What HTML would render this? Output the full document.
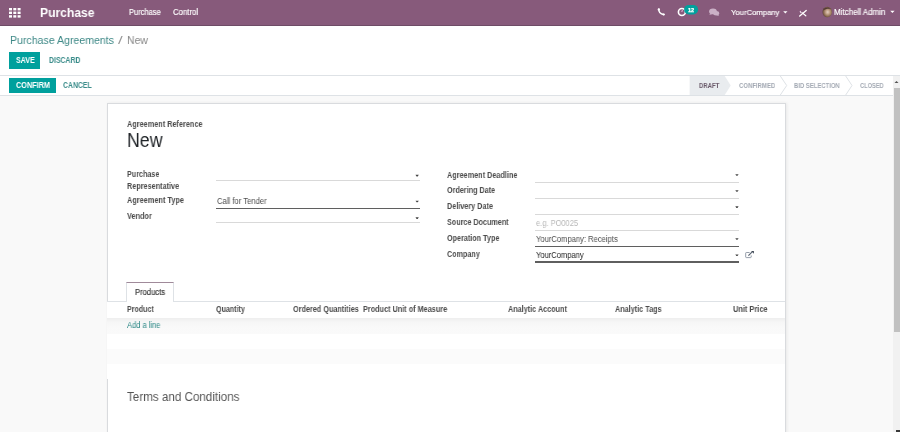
<!DOCTYPE html>
<html><head><meta charset="utf-8">
<style>
html,body{margin:0;padding:0;width:900px;height:432px;overflow:hidden;background:#fff;}
body{position:relative;font-family:"Liberation Sans",sans-serif;}
.t{position:absolute;line-height:0;white-space:nowrap;transform-origin:0 0;will-change:transform;}
.bg{position:absolute;}

</style></head><body>
<div class="bg" id="nav" style="left:0;top:0;width:900px;height:25px;background:#875A7B;border-bottom:1px solid #6e4c66"></div>
<div class="bg" id="cp" style="left:0;top:26px;width:900px;height:49px;background:#fff;border-bottom:1px solid #dee2e6"></div>
<div class="bg" id="content" style="left:0;top:76px;width:893px;height:356px;background:#f9f9f9"></div>
<div class="bg" id="status" style="left:0;top:76px;width:893px;height:19px;background:#fff;border-bottom:1px solid #dee2e6"></div>
<!-- grid icon -->
<svg class="bg" style="left:9px;top:8px" width="12" height="10" viewBox="0 0 12 10">
<g fill="#fff">
<rect x="0" y="0" width="3" height="2.4"/><rect x="4.3" y="0" width="3" height="2.4"/><rect x="8.6" y="0" width="3" height="2.4"/>
<rect x="0" y="3.6" width="3" height="2.4"/><rect x="4.3" y="3.6" width="3" height="2.4"/><rect x="8.6" y="3.6" width="3" height="2.4"/>
<rect x="0" y="7.2" width="3" height="2.4"/><rect x="4.3" y="7.2" width="3" height="2.4"/><rect x="8.6" y="7.2" width="3" height="2.4"/>
</g></svg>
<!-- SAVE / CONFIRM buttons -->
<div class="bg" style="left:9px;top:52px;width:31px;height:17px;background:#00A09D"></div>
<div class="bg" style="left:9px;top:78px;width:46.5px;height:15px;background:#00A09D"></div>
<!-- statusbar -->
<svg class="bg" style="left:680px;top:76px" width="213" height="19" viewBox="0 0 213 19">
<polygon points="9.6,0 44.7,0 50.7,9.5 44.7,19 9.6,19" fill="#e9ecef"/>
<polyline points="100.3,0 106.7,9.5 100.3,19" fill="none" stroke="#dee2e6" stroke-width="1"/>
<polyline points="165.7,0 172,9.5 165.7,19" fill="none" stroke="#dee2e6" stroke-width="1"/>
</svg>
<!-- scrollbar -->
<div class="bg" style="left:893px;top:76px;width:7px;height:356px;background:#f1f1f1"></div>
<div class="bg" style="left:894px;top:88px;width:6px;height:244px;background:#c1c1c1"></div>
<svg class="bg" style="left:893px;top:76px" width="7" height="12" viewBox="0 0 7 12"><polygon points="1.5,7 3.5,5 5.5,7" fill="#505050"/></svg>
<div class="bg" style="left:896px;top:430px;width:4px;height:2px;background:#3a3a3a"></div>
<!-- sheet -->
<div class="bg" id="sheet" style="left:107px;top:103px;width:677px;height:340px;background:#fff;border:1px solid #d9dbde;box-shadow:1px 0 3px rgba(0,0,0,.07)"></div>
<!-- field lines left -->
<div class="bg" style="left:216px;top:180px;width:203.5px;height:1px;background:#d9d9d9"></div>
<div class="bg" style="left:216px;top:207.5px;width:203.5px;height:1.5px;background:#5f5f5f"></div>
<div class="bg" style="left:216px;top:222px;width:203.5px;height:1px;background:#d9d9d9"></div>
<!-- field lines right -->
<div class="bg" style="left:535px;top:181.5px;width:204px;height:1px;background:#d9d9d9"></div>
<div class="bg" style="left:535px;top:197.5px;width:204px;height:1px;background:#d9d9d9"></div>
<div class="bg" style="left:535px;top:213.5px;width:204px;height:1px;background:#d9d9d9"></div>
<div class="bg" style="left:535px;top:229.5px;width:204px;height:1px;background:#d9d9d9"></div>
<div class="bg" style="left:535px;top:245.5px;width:204px;height:1.5px;background:#5f5f5f"></div>
<div class="bg" style="left:535px;top:261px;width:204px;height:1.5px;background:#5f5f5f"></div>
<!-- carets -->
<svg class="bg" style="left:0;top:0" width="900" height="432">
<g fill="#444"><polygon points="415.5,174.8 418.8,174.8 417.7,176.4 416.6,176.4"/><polygon points="415.5,200.7 418.8,200.7 417.7,202.3 416.6,202.3"/><polygon points="415.5,217.3 418.8,217.3 417.7,218.9 416.6,218.9"/><polygon points="735.3,174.2 738.6,174.2 737.5,175.8 736.4,175.8"/><polygon points="735.3,190.2 738.6,190.2 737.5,191.8 736.4,191.8"/><polygon points="735.3,206.3 738.6,206.3 737.5,207.9 736.4,207.9"/><polygon points="735.3,238.2 738.6,238.2 737.5,239.8 736.4,239.8"/><polygon points="735.3,254.5 738.6,254.5 737.5,256.1 736.4,256.1"/></g>
<g fill="#fff">
<polygon points="783.2,11.2 787.5,11.2 785.35,13.4"/>
<polygon points="890.2,10.8 894.6,10.8 892.4,13.0"/>
</g>
</svg>
<!-- notebook tab -->
<div class="bg" style="left:107px;top:301px;width:678px;height:1px;background:#dee2e6"></div>
<div class="bg" style="left:126px;top:282px;width:46px;height:20px;background:#fff;border:1px solid #dee2e6;border-top:1px solid #a08a9a;border-bottom:none"></div>
<!-- table rows -->
<div class="bg" style="left:107px;top:302px;width:678px;height:16px;background:#fff"></div>
<div class="bg" style="left:107px;top:318px;width:678px;height:15.5px;background:linear-gradient(#eeeeee,#f6f6f6 25%,#f9f9f9 55%,#fafafa)"></div>
<div class="bg" style="left:107px;top:333.5px;width:678px;height:15px;background:#fff"></div>
<div class="bg" style="left:107px;top:348.5px;width:678px;height:15px;background:#fbfbfb"></div>
<div class="bg" style="left:107px;top:363.5px;width:678px;height:15px;background:#fff"></div>
<!-- nav icons -->
<svg class="bg" style="left:0;top:0" width="900" height="25" viewBox="0 0 900 25">
<!-- phone -->
<path d="M658.9,9.2 Q658.3,13.6 663.9,14.5" fill="none" stroke="#fff" stroke-width="1.5" stroke-linecap="round"/>
<ellipse cx="658.8" cy="9.4" rx="1.1" ry="1.2" fill="#fff"/>
<ellipse cx="663.6" cy="14.4" rx="1.2" ry="1.0" fill="#fff"/>
<!-- clock -->
<circle cx="681.9" cy="12.0" r="3.5" fill="none" stroke="#fff" stroke-width="1.6"/>
<path d="M681.8,12 L682.4,10.0" stroke="#e8c0e0" stroke-width="1"/>
<rect x="684.1" y="4.9" width="14" height="9.6" rx="4.8" fill="#00A09D"/>
<!-- chat -->
<g fill="#cbb0c6">
<ellipse cx="713" cy="11.4" rx="3.9" ry="2.9"/>
<path d="M710.2,13.2 L709.4,15.0 L712.2,14.0 Z"/>
<ellipse cx="716.2" cy="13.2" rx="3.0" ry="2.2"/>
<path d="M718,14.5 L719.2,16.0 L716.5,15.2 Z"/>
</g>
<!-- tools X -->
<g stroke="#fff" stroke-linecap="round">
<line x1="799.7" y1="16.0" x2="806.2" y2="10.5" stroke-width="1.3"/>
<line x1="802.3" y1="12.9" x2="805.8" y2="15.8" stroke-width="1.2"/>
</g>
<path d="M798.9,10.9 L799.9,11.8 L800.6,10.6 L801.3,12.0 L801.9,12.9 L800.8,13.3 Z" fill="#f4e0f0"/>
<!-- avatar -->
<defs>
<radialGradient id="av" cx="0.55" cy="0.5" r="0.6">
<stop offset="0" stop-color="#e0ccc0"/><stop offset="0.3" stop-color="#c8a890"/><stop offset="0.7" stop-color="#8a6a50"/><stop offset="1" stop-color="#4a3430"/>
</radialGradient>
</defs>
<ellipse cx="827.2" cy="12.05" rx="4.7" ry="5.2" fill="url(#av)"/>
<path d="M823.2,10.5 C823.5,7.5 829.5,6.4 830.8,9.2 C829.2,8.4 825.5,8.6 823.2,10.5 Z" fill="#4a3430" opacity="0.9"/>
<path d="M829.8,9.5 C831.5,10.5 831.8,14 830.5,15.5 C830.8,13 830.5,11 829.8,9.5 Z" fill="#b89a70" opacity="0.8"/>
</svg>
<!-- external link -->
<svg class="bg" style="left:744px;top:250px" width="11" height="9" viewBox="0 0 11 9">
<path d="M5.6,2.5 L2.3,2.5 Q1.7,2.5 1.7,3.1 L1.7,7 Q1.7,7.6 2.3,7.6 L6.6,7.6 Q7.2,7.6 7.2,7 L7.2,5.4" fill="none" stroke="#8a93a0" stroke-width="0.9"/>
<path d="M4.4,5.6 L8.4,1.7" stroke="#56606e" stroke-width="1.1"/>
<path d="M7.2,1.0 L9.9,1.0 L9.9,3.7 Z" fill="#3c4652"/>
</svg>
<div class="t" id="brand" style="left:40.40px;top:12.94px;font-size:12.94px;font-weight:bold;color:#fff;transform:scaleX(0.9358)">Purchase</div>
<div class="t" id="m1" style="left:129.20px;top:11.99px;font-size:8.72px;font-weight:normal;color:#fff;transform:scaleX(0.8631);-webkit-text-stroke:0.15px #fff">Purchase</div>
<div class="t" id="m2" style="left:173.00px;top:11.99px;font-size:8.72px;font-weight:normal;color:#fff;transform:scaleX(0.8892);-webkit-text-stroke:0.15px #fff">Control</div>
<div class="t" id="comp" style="left:731.00px;top:13.24px;font-size:7.99px;font-weight:normal;color:#fff;transform:scaleX(0.9630);-webkit-text-stroke:0.15px #fff">YourCompany</div>
<div class="t" id="user" style="left:834.40px;top:12.59px;font-size:8.14px;font-weight:normal;color:#fff;transform:scaleX(0.9833);-webkit-text-stroke:0.15px #fff">Mitchell Admin</div>
<div class="t" id="badge" style="left:687.90px;top:9.94px;font-size:5.38px;font-weight:bold;color:#fff;transform:scaleX(1.0367);-webkit-text-stroke:0.25px #fff">12</div>
<div class="t" id="bc1" style="left:9.80px;top:39.69px;font-size:11.63px;font-weight:normal;color:#3d8886;transform:scaleX(0.9090)">Purchase Agreements</div>
<div class="t" id="bcs" style="left:118.00px;top:39.69px;font-size:11.63px;font-weight:normal;color:#999;transform:scaleX(1.4540)">/</div>
<div class="t" id="bc2" style="left:126.60px;top:39.69px;font-size:11.63px;font-weight:normal;color:#888;transform:scaleX(0.9016)">New</div>
<div class="t" id="save" style="left:15.50px;top:59.79px;font-size:8.43px;font-weight:bold;color:#fff;transform:scaleX(0.8419)">SAVE</div>
<div class="t" id="discard" style="left:48.60px;top:59.79px;font-size:8.43px;font-weight:bold;color:#3a8c8a;transform:scaleX(0.8201)">DISCARD</div>
<div class="t" id="confirm" style="left:15.90px;top:85.09px;font-size:8.43px;font-weight:bold;color:#fff;transform:scaleX(0.8644)">CONFIRM</div>
<div class="t" id="cancel" style="left:63.40px;top:85.09px;font-size:8.43px;font-weight:bold;color:#3a8c8a;transform:scaleX(0.8170)">CANCEL</div>
<div class="t" id="s1" style="left:698.80px;top:86.29px;font-size:7.27px;font-weight:bold;color:#6b5b6b;transform:scaleX(0.8245)">DRAFT</div>
<div class="t" id="s2" style="left:738.70px;top:86.29px;font-size:7.27px;font-weight:bold;color:#a3a9b3;transform:scaleX(0.8249)">CONFIRMED</div>
<div class="t" id="s3" style="left:794.30px;top:86.29px;font-size:7.27px;font-weight:bold;color:#a3a9b3;transform:scaleX(0.8142)">BID SELECTION</div>
<div class="t" id="s4" style="left:859.70px;top:86.29px;font-size:7.27px;font-weight:bold;color:#a3a9b3;transform:scaleX(0.7793)">CLOSED</div>
<div class="t" id="aref" style="left:127.00px;top:124.19px;font-size:8.72px;font-weight:bold;color:#4c4c4c;transform:scaleX(0.8375)">Agreement Reference</div>
<div class="t" id="new" style="left:127.00px;top:140.28px;font-size:19.48px;font-weight:normal;color:#212529;transform:scaleX(0.9100)">New</div>
<div class="t" id="l1a" style="left:126.90px;top:174.09px;font-size:8.72px;font-weight:bold;color:#4c4c4c;transform:scaleX(0.8227)">Purchase</div>
<div class="t" id="l1b" style="left:126.90px;top:185.59px;font-size:8.72px;font-weight:bold;color:#4c4c4c;transform:scaleX(0.8332)">Representative</div>
<div class="t" id="l2" style="left:126.90px;top:200.19px;font-size:8.72px;font-weight:bold;color:#4c4c4c;transform:scaleX(0.8422)">Agreement Type</div>
<div class="t" id="l3" style="left:126.90px;top:216.39px;font-size:8.72px;font-weight:bold;color:#4c4c4c;transform:scaleX(0.8389)">Vendor</div>
<div class="t" id="r1" style="left:446.50px;top:174.69px;font-size:8.72px;font-weight:bold;color:#4c4c4c;transform:scaleX(0.8349)">Agreement Deadline</div>
<div class="t" id="r2" style="left:446.50px;top:190.29px;font-size:8.72px;font-weight:bold;color:#4c4c4c;transform:scaleX(0.8272)">Ordering Date</div>
<div class="t" id="r3" style="left:446.50px;top:205.99px;font-size:8.72px;font-weight:bold;color:#4c4c4c;transform:scaleX(0.8306)">Delivery Date</div>
<div class="t" id="r4" style="left:446.50px;top:221.79px;font-size:8.72px;font-weight:bold;color:#4c4c4c;transform:scaleX(0.8255)">Source Document</div>
<div class="t" id="r5" style="left:446.50px;top:237.99px;font-size:8.72px;font-weight:bold;color:#4c4c4c;transform:scaleX(0.8276)">Operation Type</div>
<div class="t" id="r6" style="left:446.50px;top:254.19px;font-size:8.72px;font-weight:bold;color:#4c4c4c;transform:scaleX(0.8255)">Company</div>
<div class="t" id="v1" style="left:216.70px;top:200.59px;font-size:8.72px;font-weight:normal;color:#4c4c4c;transform:scaleX(0.8788)">Call for Tender</div>
<div class="t" id="v2" style="left:535.90px;top:223.44px;font-size:8.58px;font-weight:normal;color:#b8b8b8;transform:scaleX(0.8722)">e.g. PO0025</div>
<div class="t" id="v3" style="left:536.40px;top:238.84px;font-size:8.58px;font-weight:normal;color:#4c4c4c;transform:scaleX(0.8865)">YourCompany: Receipts</div>
<div class="t" id="v4" style="left:536.40px;top:255.04px;font-size:8.58px;font-weight:normal;color:#222;transform:scaleX(0.8811)">YourCompany</div>
<div class="t" id="tab" style="left:134.90px;top:293.14px;font-size:8.28px;font-weight:normal;color:#3c3c3c;transform:scaleX(0.9207);-webkit-text-stroke:0.2px #3c3c3c">Products</div>
<div class="t" id="h1" style="left:127.00px;top:309.74px;font-size:8.28px;font-weight:bold;color:#4c4c4c;transform:scaleX(0.8562)">Product</div>
<div class="t" id="h2" style="left:215.90px;top:309.74px;font-size:8.28px;font-weight:bold;color:#4c4c4c;transform:scaleX(0.8600)">Quantity</div>
<div class="t" id="h3" style="left:292.50px;top:309.74px;font-size:8.28px;font-weight:bold;color:#4c4c4c;transform:scaleX(0.8781)">Ordered Quantities</div>
<div class="t" id="h4" style="left:362.70px;top:309.74px;font-size:8.28px;font-weight:bold;color:#4c4c4c;transform:scaleX(0.8804)">Product Unit of Measure</div>
<div class="t" id="h5" style="left:508.30px;top:309.74px;font-size:8.28px;font-weight:bold;color:#4c4c4c;transform:scaleX(0.8758)">Analytic Account</div>
<div class="t" id="h6" style="left:615.00px;top:309.74px;font-size:8.28px;font-weight:bold;color:#4c4c4c;transform:scaleX(0.8769)">Analytic Tags</div>
<div class="t" id="h7" style="left:732.70px;top:309.74px;font-size:8.28px;font-weight:bold;color:#4c4c4c;transform:scaleX(0.8947)">Unit Price</div>
<div class="t" id="add" style="left:127.00px;top:326.19px;font-size:8.14px;font-weight:normal;color:#2a8785;transform:scaleX(0.9253)">Add a line</div>
<div class="t" id="terms" style="left:127.20px;top:396.69px;font-size:13.66px;font-weight:normal;color:#555;transform:scaleX(0.8514)">Terms and Conditions</div>
</body></html>
